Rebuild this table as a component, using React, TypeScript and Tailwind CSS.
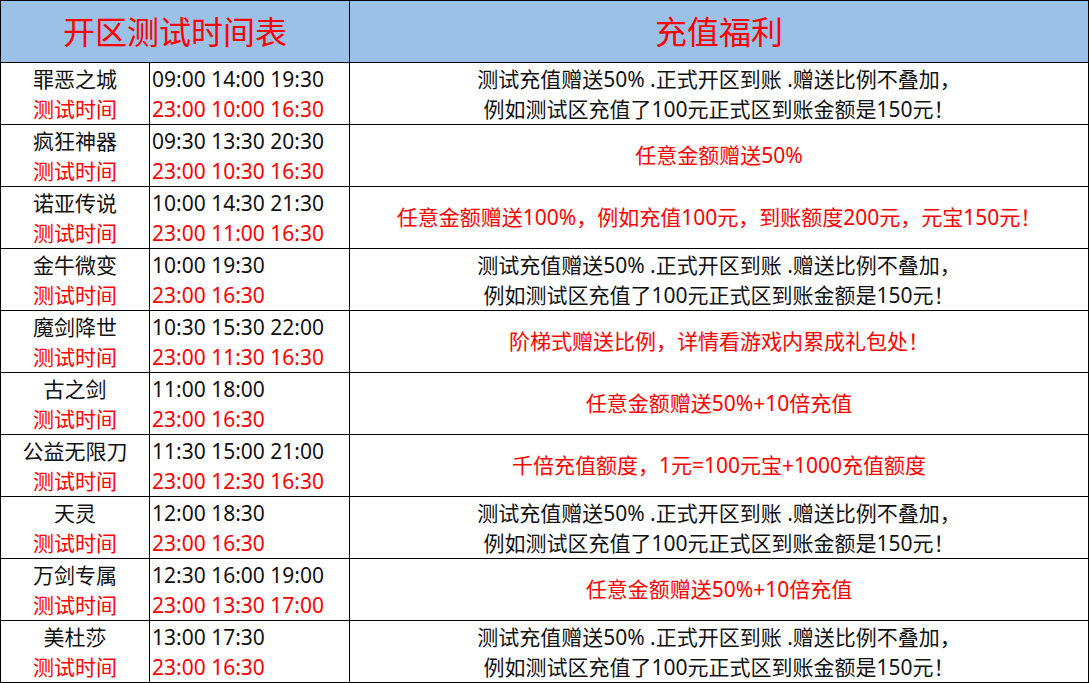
import React from "react";

const rows = [
  { name: "罪恶之城", open: "09:00 14:00 19:30", test: "23:00 10:00 16:30", perk: "std" },
  { name: "疯狂神器", open: "09:30 13:30 20:30", test: "23:00 10:30 16:30", perk: "任意金额赠送50%" },
  { name: "诺亚传说", open: "10:00 14:30 21:30", test: "23:00 11:00 16:30", perk: "任意金额赠送100%，例如充值100元，到账额度200元，元宝150元！" },
  { name: "金牛微变", open: "10:00 19:30", test: "23:00 16:30", perk: "std" },
  { name: "魔剑降世", open: "10:30 15:30 22:00", test: "23:00 11:30 16:30", perk: "阶梯式赠送比例，详情看游戏内累成礼包处！" },
  { name: "古之剑", open: "11:00 18:00", test: "23:00 16:30", perk: "任意金额赠送50%+10倍充值" },
  { name: "公益无限刀", open: "11:30 15:00 21:00", test: "23:00 12:30 16:30", perk: "千倍充值额度，1元=100元宝+1000充值额度" },
  { name: "天灵", open: "12:00 18:30", test: "23:00 16:30", perk: "std" },
  { name: "万剑专属", open: "12:30 16:00 19:00", test: "23:00 13:30 17:00", perk: "任意金额赠送50%+10倍充值" },
  { name: "美杜莎", open: "13:00 17:30", test: "23:00 16:30", perk: "std" },
];

export default function App() {
  return (
    <div className="w-[1089px] h-[683px] bg-white font-['Noto_Sans','Noto_Sans_CJK_SC',sans-serif]">
      <div className="grid grid-cols-[148px_199px_738px] auto-rows-[61px] gap-px bg-black p-px">
        {/* header */}
        <div className="col-span-2 bg-[#9bc2e6] flex items-center justify-center text-[32px] text-[#ff0000]">
          开区测试时间表
        </div>
        <div className="bg-[#9bc2e6] flex items-center justify-center text-[32px] text-[#ff0000]">
          充值福利
        </div>

        {rows.map((r) => (
          <React.Fragment key={r.name}>
            <div className="bg-white flex flex-col items-center justify-center text-[21px] leading-[30px]">
              <span className="text-[#111]">{r.name}</span>
              <span className="text-[#ff0000]">测试时间</span>
            </div>
            <div className="bg-white flex flex-col justify-center pl-[2px] text-[21px] leading-[30px]">
              <span className="text-[#111]">{r.open}</span>
              <span className="text-[#ff0000]">{r.test}</span>
            </div>
            {r.perk === "std" ? (
              <div className="bg-white flex flex-col items-center justify-center text-[21px] leading-[30px] text-[#111]">
                <span>测试充值赠送50% .正式开区到账 .赠送比例不叠加，</span>
                <span>例如测试区充值了100元正式区到账金额是150元！</span>
              </div>
            ) : (
              <div className="bg-white flex items-center justify-center text-[21px] text-[#ff0000]">
                {r.perk}
              </div>
            )}
          </React.Fragment>
        ))}
      </div>
    </div>
  );
}
